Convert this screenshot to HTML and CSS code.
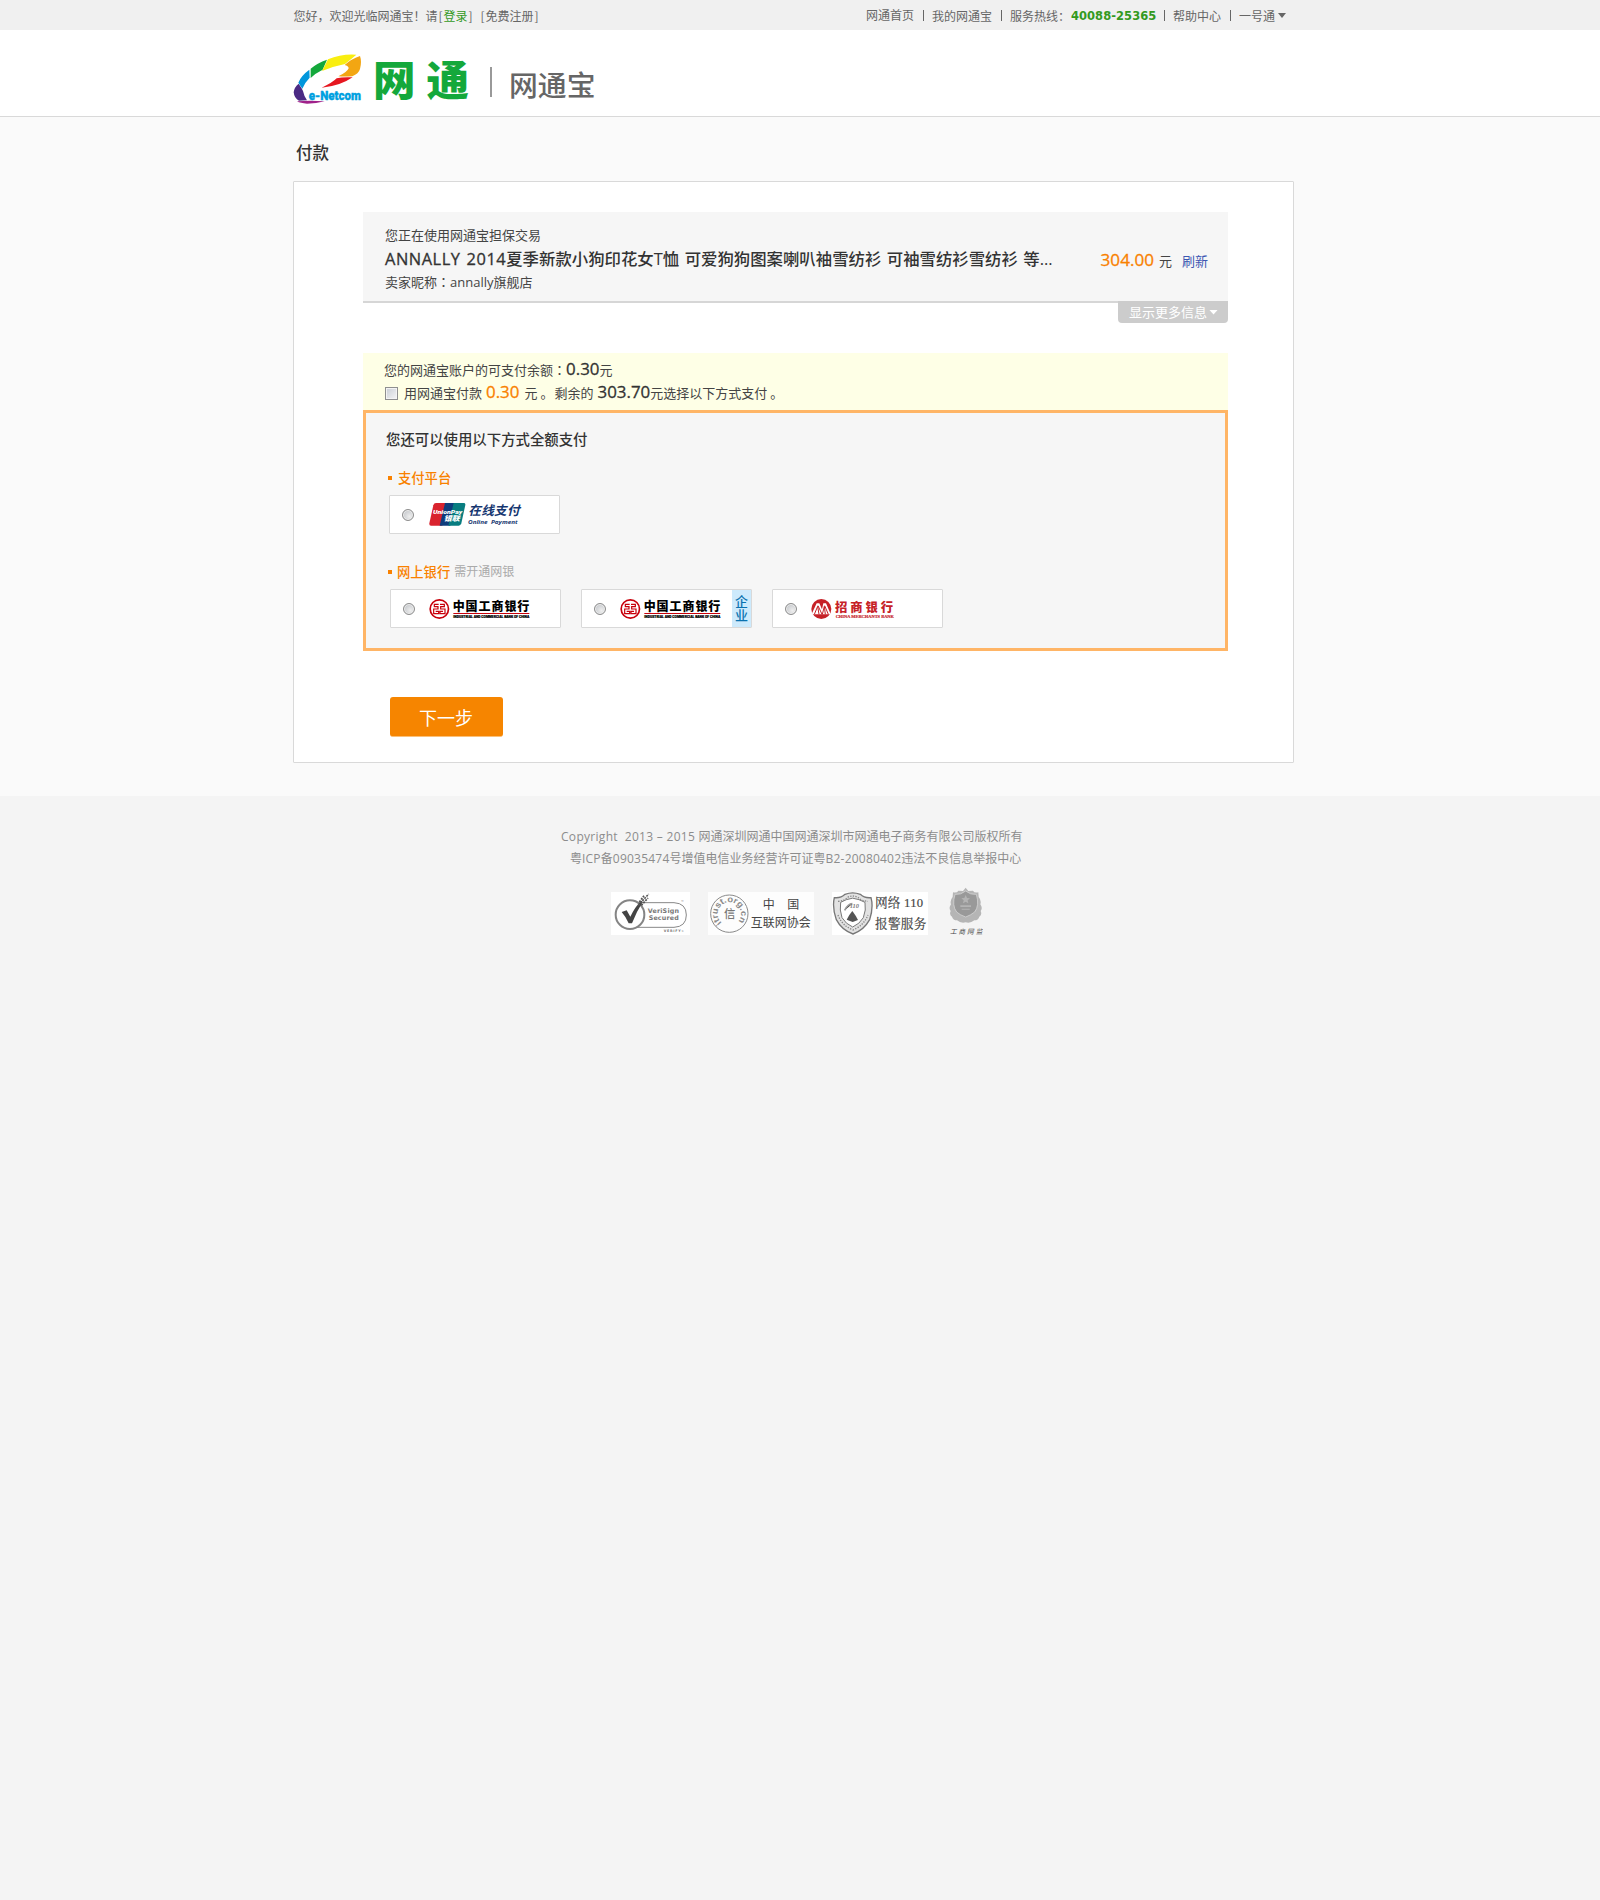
FILE: index.html
```html
<!DOCTYPE html>
<html lang="zh-CN">
<head>
<meta charset="utf-8">
<title>网通宝 - 付款</title>
<link rel="stylesheet" href="styles.css">
</head>
<body>
<div class="topbar">
  <div class="wrap topbar-row">
    <div class="welcome">您好，欢迎光临网通宝！请<i class="half">[</i><a class="green">登录</a><i class="half">]</i><i class="half"></i><i class="half">[</i>免费注册<i class="half">]</i></div>
    <nav class="topnav">
      <a>网通首页</a><a>我的网通宝</a>
      <span class="hotline">服务热线：<b>40088-25365</b></span>
      <a>帮助中心</a><a class="drop">一号通<i class="caret"></i></a>
    </nav>
  </div>
</div>
<header class="header">
  <div class="wrap brand">
    <svg class="logo-mark" viewBox="40 160 210 156">
      <path fill="#4b2a84" d="M57 252Q67 266 70 274Q73 290 82 302L58 303Q44 297 42 278Q44 262 57 252z"/>
      <path fill="#a0218a" d="M52 305Q90 301 135 305Q110 312 82 312Q62 311 52 305z"/>
      <path fill="#0096dc" d="M56 249Q64 228 89 210L90 234Q76 248 68 267z"/>
      <path fill="#14a83b" d="M93 207Q113 190 142 180L129 210Q108 220 93 235z"/>
      <path fill="#f9ee10" d="M145 179Q185 162 230 165L212 180Q202 188 196 193Q160 200 127 214z"/>
      <path fill="#f3a612" d="M241 169Q247 186 241 208Q237 222 218 230Q192 231 176 230Q202 218 207 206Q206 198 195 196Q214 178 241 169z"/>
      <path fill="#e61720" d="M219 233Q180 260 126 264Q160 248 171 236Q190 231 219 233z"/>
      <text x="87" y="300" textLength="157" lengthAdjust="spacingAndGlyphs" class="mark-text">e-Netcom</text>
    </svg>
    <div class="brand-name"><span>网</span><span>通</span></div>
    <div class="product">网通宝</div>
  </div>
</header>
<main class="main">
  <div class="wrap">
    <h1 class="page-title">付款</h1>
    <section class="card">
      <div class="order">
        <div class="order-info">
          <p class="line">您正在使用网通宝担保交易</p>
          <p class="order-title"><span class="latin">ANNALLY 2014</span>夏季新款小狗印花女T恤 可爱狗狗图案喇叭袖雪纺衫 可袖雪纺衫雪纺衫 等...</p>
          <p class="line seller">卖家昵称<i class="colon" lang="zh-TW">：</i>annally旗舰店</p>
        </div>
        <div class="price"><b class="num orange">304.00</b><span>元</span><a>刷新</a></div>
      </div>
      <div class="more">显示更多信息<i class="caret white"></i></div>
      <div class="balance">
        <p>您的网通宝账户的可支付余额<i class="colon" lang="zh-TW">：</i><b class="num">0.30</b>元</p>
        <label><input type="checkbox" class="check"><span class="use">用网通宝付款</span><b class="num orange">0.30</b><span class="yuan">元</span><span class="stop">。</span><span class="rest">剩余的</span><b class="num">303.70</b>元选择以下方式支付<span class="stop">。</span></label>
      </div>
      <div class="methods">
        <h2>您还可以使用以下方式全额支付</h2>
        <h3>支付平台</h3>
        <div class="options platform">
          <label class="option"><input type="radio" name="pay" class="radio">
            <svg class="pay-logo" width="100" height="29" viewBox="170 120 300 87">
              <path fill="#d9232e" d="M197 129H232L216 197H182Q176 197 177 190L189 136Q191 129 197 129z"/>
              <path fill="#0f3d7c" d="M224 129H256L240 197H208z"/>
              <path fill="#087d80" d="M250 129H280Q286 129 285 135L273 190Q271 197 265 197H234z"/>
              <text x="188" y="162" textLength="88" lengthAdjust="spacingAndGlyphs" class="up-en">UnionPay</text>
              <text x="220" y="184" textLength="48" lengthAdjust="spacingAndGlyphs" class="up-cn">银联</text>
              <text x="294" y="166" textLength="154" class="online-cn">在线支付</text>
              <text x="293" y="192" textLength="149" lengthAdjust="spacingAndGlyphs" class="online-en">Online&#160; Payment</text>
            </svg>
          </label>
        </div>
        <h3 class="banks">网上银行<small>需开通网银</small></h3>
        <div class="options">
          <label class="option"><input type="radio" name="pay" class="radio">
            <svg class="bank-logo" width="105" height="26" viewBox="170 405 315 78">
              <circle cx="207" cy="444" r="27.5" fill="#fff" stroke="#c8000b" stroke-width="5"/>
              <path class="icbc-mark" d="M205 430H192V437H203V444H190V458H205V451H196M209 430H222V437H211V444H224V458H209V451H218"/>
              <text x="247" y="450" textLength="230" class="icbc-cn">中国工商银行</text>
              <path fill="#c8000b" d="M249 456H477V459H249z"/>
              <text x="249" y="471" textLength="228" lengthAdjust="spacingAndGlyphs" class="icbc-en">INDUSTRIAL AND COMMERCIAL BANK OF CHINA</text>
            </svg>
          </label>
          <label class="option"><input type="radio" name="pay" class="radio">
            <svg class="bank-logo" width="105" height="26" viewBox="170 405 315 78">
              <circle cx="207" cy="444" r="27.5" fill="#fff" stroke="#c8000b" stroke-width="5"/>
              <path class="icbc-mark" d="M205 430H192V437H203V444H190V458H205V451H196M209 430H222V437H211V444H224V458H209V451H218"/>
              <text x="247" y="450" textLength="230" class="icbc-cn">中国工商银行</text>
              <path fill="#c8000b" d="M249 456H477V459H249z"/>
              <text x="249" y="471" textLength="228" lengthAdjust="spacingAndGlyphs" class="icbc-en">INDUSTRIAL AND COMMERCIAL BANK OF CHINA</text>
            </svg>
            <span class="corp">企业</span>
          </label>
          <label class="option"><input type="radio" name="pay" class="radio">
            <svg class="bank-logo" width="105" height="26" viewBox="206 105 315 78">
              <circle cx="243" cy="144" r="30" fill="#c62127"/>
              <path fill="#fff" d="M215 157L229 127H237L245 145L249 127H257L270 157V160H216z"/>
              <path fill="none" stroke="#c62127" stroke-width="3" d="M222 160L232 136L236 160M233 134L245 160M246 160L252 136L255 160M253 134L264 160"/>
              <text x="284" y="154" textLength="174" class="cmb-cn">招商银行</text>
              <text x="286" y="172" textLength="175" lengthAdjust="spacingAndGlyphs" class="cmb-en">CHINA MERCHANTS BANK</text>
            </svg>
          </label>
        </div>
      </div>
      <button class="next">下一步</button>
    </section>
  </div>
</main>
<footer class="footer">
  <p class="copy"><span>Copyright&nbsp; 2013 – 2015 </span>网通深圳网通中国网通深圳市网通电子商务有限公司版权所有</p>
  <p class="icp">粤<span>ICP</span>备<span>09035474</span>号增值电信业务经营许可证粤<span>B2-20080402</span>违法不良信息举报中心</p>
  <div class="badges">
    <svg class="verisign" width="79" height="43" viewBox="33 36 237 129">
      <rect x="33" y="36" width="237" height="129" fill="#fff"/>
      <path fill="none" stroke="#888" stroke-width="3" d="M110 68H222Q259 70 259 105T222 142H110"/>
      <circle cx="90" cy="104" r="43" fill="#fff" stroke="#858585" stroke-width="6"/>
      <path fill="#444" d="M65 96L80 91L91 110Q105 80 124 62L128 66Q110 94 96 130H86Q76 108 65 96z"/>
      <path fill="none" stroke="#555" stroke-width="5" stroke-dasharray="6 3" d="M115 76L146 42M118 66L132 47M124 76L144 54"/>
      <text x="143" y="98" textLength="94" class="vs-text">VeriSign</text>
      <text x="146" y="121" textLength="90" class="vs-text">Secured</text>
      <text x="242" y="70" class="vs-tiny">™</text>
      <text x="191" y="157" textLength="60" class="vs-tiny">VERIFY»</text>
    </svg>
    <svg class="itrust" width="106" height="43" viewBox="324 36 318 129">
      <rect x="324" y="36" width="318" height="129" fill="#fdfdfd"/>
      <circle cx="388" cy="101" r="56" fill="none" stroke="#8a8a8a" stroke-width="3"/>
      <path id="ring" fill="none" d="M365 128A35 35 0 1 1 411 128"/>
      <text class="ring-text" textLength="164" lengthAdjust="spacingAndGlyphs"><textPath href="#ring">itrust.org.cn</textPath></text>
      <text x="372" y="114" class="xin">信</text>
      <text x="488" y="87" textLength="110" class="it-cn">中 国</text>
      <text x="452" y="142" textLength="180" class="it-cn">互联网协会</text>
    </svg>
    <svg class="police" width="96" height="43" viewBox="36 36 288 129">
      <rect x="36" y="36" width="288" height="129" fill="#fff"/>
      <path fill="#e2e2e2" stroke="#777" stroke-width="4" d="M75 43Q98 34 121 43Q133 55 153 53Q161 82 149 119Q132 150 99 162Q65 150 49 119Q36 82 43 53Q63 55 75 43z"/>
      <path fill="#fff" stroke="#777" stroke-width="3" d="M79 59Q98 50 117 59L135 67Q139 90 130 113Q119 132 98 141Q77 132 66 113Q58 90 62 67z"/>
      <path fill="none" stroke="#888" stroke-width="4" stroke-dasharray="4 4" d="M54 64Q74 63 81 53Q98 43 115 53Q124 63 144 64M54 105Q65 136 99 150Q132 136 144 105"/>
      <path fill="#555" d="M97 93L107 107L114 120L98 126L80 119L88 105z"/>
      <path stroke="#999" stroke-width="5" d="M74 91Q84 72 97 71"/>
      <text x="89" y="84" class="p-num">110</text>
      <text x="165" y="81" textLength="144" class="p-cn">网络 110</text>
      <text x="165" y="143" textLength="154" class="p-cn">报警服务</text>
    </svg>
    <svg class="emblem" width="34" height="50" viewBox="388 22 102 150">
      <path fill="#b5b5b5" d="M438 24L446 34L460 33Q464 41 476 38L477 52Q486 62 482 74Q490 85 483 94Q488 105 479 111Q476 122 464 122Q452 132 438 128Q424 132 412 122Q400 122 397 111Q388 105 393 94Q386 85 394 74Q390 62 399 52L400 38Q412 41 416 33L430 34z"/>
      <path fill="#999" stroke="#ddd" stroke-width="2" d="M438 34Q452 46 470 44Q480 78 465 97Q454 106 438 112Q421 106 411 97Q396 78 406 44Q424 46 438 34z"/>
      <path fill="#b4b4b4" d="M438 46L442 55L451 56L444 62L446 71L438 66L430 71L432 62L425 56L434 55zM422 77H454V82H422zM426 87H450V90H426z"/>
      <text x="391" y="162" textLength="97" class="em-cn">工商网监</text>
    </svg>
  </div>
</footer>
</body>
</html>
```

FILE: styles.css
```css
* { box-sizing: border-box; }
body {
  margin: 0;
  min-height: 1900px;
  background: #f4f4f4;
  color: #444;
  font: 13px/24px "Open Sans", "Noto Sans CJK SC", sans-serif;
}
p, h1, h2, h3 { margin: 0; font-weight: 400; }
i { font-style: normal; }
.wrap { width: 1001px; margin-left: 293px; }
.green { color: #339a1e; }
.orange { color: #f98100 !important; }

.topbar { height: 30px; background: #f0f0f0; color: #666; font: 12px/30px "Noto Sans CJK SC", sans-serif; }
.topbar-row { display: flex; justify-content: space-between; white-space: nowrap; }
.welcome { padding: 1px 0 0 .5px; }
.half { display: inline-block; width: 6px; text-align: center; }
.topnav { display: flex; padding-right: 8px; }
.topnav > * + * { display: flex; align-items: center; margin-left: 9px; }
.topnav > * + *::before { content: ""; width: 1px; height: 11px; margin-right: 8px; background: #666; }
.hotline b { width: 84px; margin-left: 1px; color: #339a1e; font: bold 11.5px "DejaVu Sans", sans-serif; letter-spacing: .05px; }
.caret { width: 8px; height: 5px; margin-left: 3px; background: #666; clip-path: polygon(0 0, 100% 0, 50% 100%); }

.header { height: 87px; background: #fff; border-bottom: 1px solid #d9d9d9; }
.brand { display: flex; }
.logo-mark { width: 70px; height: 52px; margin-top: 23px; overflow: visible; }
.mark-text { font: 900 36px Roboto, sans-serif; fill: #00a0e0; stroke: #00a0e0; stroke-width: 1px; }
.brand-name { display: flex; gap: 11px; margin: 27px 0 0 10px; color: #14a83b; font: 900 42.5px/42px "Noto Sans CJK SC", sans-serif; }
.product { height: 30px; margin: 37px 0 0 21px; padding-left: 17px; border-left: 2px solid #999; color: #666; font: 500 28.8px/34px "Noto Sans CJK SC", sans-serif; }

.main { height: 679px; background: #fafafa; }
.page-title { height: 64px; padding: 24px 0 0 3px; color: #333; font-size: 16.5px; font-weight: 500; }
.card { height: 582px; padding: 30px 65px 0 69px; background: #fff; border: 1px solid #d9d9d9; border-radius: 1px; }
.order { display: flex; justify-content: space-between; height: 91px; padding: 11px 20px 0 22px; background: #f6f6f6; border-bottom: 2px solid #d6d6d6; white-space: nowrap; }
.order-title { color: #333; font-size: 16.4px; font-weight: 500; word-spacing: 1.2px; }
.latin { letter-spacing: .55px; -webkit-text-stroke: .3px #333; }
.seller { margin-top: -1px; }
.price { display: flex; margin-top: 26px; }
.price .num { margin-top: -1px; font-size: 17.1px; }
.price span { margin-left: 5px; }
.price a { margin-left: 10px; color: #3c57b2; }
.num { color: #333; font-size: 16.9px; font-weight: 400; -webkit-text-stroke: .3px; }
.colon { font-family: "Noto Sans CJK TC", sans-serif; font-weight: 400; }
.more { display: flex; align-items: center; width: 110px; height: 22px; margin: -2px 0 0 auto; padding-left: 11px; position: relative; background: #ccc; border-radius: 0 0 4px 4px; color: #fff; line-height: 22px; }
.caret.white { width: 9px; margin-left: 2px; background: #fff; }
.balance { height: 57px; margin-top: 30px; padding: 5px 0 0 21px; background: #feffe6; white-space: nowrap; }
.balance p, .balance label { display: flex; height: 23px; }
.balance .num { margin-top: -1px; }
.check { appearance: none; width: 13px; height: 13px; margin: 6px 6px 0 1px; border: 1px solid #8e8f8f; background: linear-gradient(135deg, #c9ced6, #f5f5f5); box-shadow: inset 0 0 0 1px #f4f4f4; }
.use { margin-right: 4px; }
.yuan { margin-left: 5px; }
.stop { margin-left: 3px; }
.rest { margin: 0 4px 0 1px; }
.methods { height: 241px; padding: 15px 20px 0 20px; background: #f6f6f6; border: 3px solid #ffb566; }
.methods h2 { color: #333; font-size: 14.4px; font-weight: 500; }
.methods h3 { display: flex; align-items: center; margin: 14px 0 0 2px; color: #f98100; font-size: 13.3px; font-weight: 500; }
.methods h3::before { content: ""; width: 4px; height: 4px; margin-right: 6px; background: #f98100; }
.methods h3.banks::before { margin-right: 5px; }
.methods small { margin-left: 4px; color: #aaa; font-size: 12px; font-weight: 400; }
.options { display: flex; gap: 20px; margin: 5px 0 0 4px; }
.options.platform { margin: 5px 0 26px 3px; }
.option { display: flex; align-items: center; width: 171px; height: 39px; padding-left: 12px; background: #fff; border: 1px solid #d9d9d9; border-radius: 1px; }
.radio { appearance: none; width: 12px; height: 12px; margin: 0; border: 1px solid #8c8c8c; border-radius: 50%; background: radial-gradient(circle at 65% 65%, #eee, #b9bdc2); box-shadow: inset 0 0 0 1px #eee; }
.pay-logo, .bank-logo { flex: none; margin-left: 12px; }
.pay-logo { margin-left: 13px; }
.corp { width: 19px; height: 37px; margin-left: auto; padding: 4px 3px 0; background: #cdeafc; color: #0a72b0; font-size: 13px; font-weight: 500; line-height: 14px; }
.up-en { font: italic 900 18px Roboto, sans-serif; fill: #fff; }
.up-cn { font: italic 900 21px "Noto Sans CJK SC", sans-serif; fill: #fff; }
.online-cn { font: italic 700 38px "Noto Sans CJK SC", sans-serif; fill: #15366f; }
.online-en { font: italic bold 17px "Open Sans", sans-serif; fill: #15366f; }
.icbc-mark { fill: none; stroke: #c8000b; stroke-width: 3.6; }
.icbc-cn { font: 900 36px "Noto Sans CJK SC", sans-serif; fill: #000; }
.icbc-en { font: 900 10px Roboto, sans-serif; fill: #000; stroke: #000; stroke-width: .6px; }
.cmb-cn { font: 900 37px "Noto Sans CJK SC", sans-serif; fill: #c62127; }
.cmb-en { font: bold 13px "Liberation Serif", serif; fill: #c62127; stroke: #c62127; stroke-width: .5px; }
.next { display: block; width: 113px; height: 40px; margin: 46px 0 0 27px; padding: 0 1px 0 0; border: 0; border-bottom: 1px solid #fbc078; border-radius: 3px; background: #f68500; color: #fff; font: 18px/40px "Noto Sans CJK SC", sans-serif; }

.footer { color: #8c8c8c; font-size: 12px; line-height: 22px; padding-top: 30px; white-space: nowrap; }
.copy { padding-left: 561px; }
.copy span { letter-spacing: .3px; }
.icp { padding-left: 570px; }
.icp span { letter-spacing: .22px; }
.badges { display: flex; align-items: flex-start; margin: 18px 0 0 611px; }
.badges svg { margin-top: 4px; }
.badges .itrust { margin-left: 18px; }
.badges .police { margin-left: 18px; }
.badges .emblem { margin: -1px 0 0 21px; }
.vs-text { font: bold 19px "DejaVu Sans", sans-serif; fill: #777; }
.vs-tiny { font: bold 10px "DejaVu Sans", sans-serif; fill: #777; }
.ring-text { font: bold 26px "Liberation Sans", sans-serif; fill: #8a8a8a; }
.xin { font: 500 34px "Noto Sans CJK SC", sans-serif; fill: #777; }
.it-cn { font: 36px "Noto Sans CJK SC", sans-serif; fill: #444; }
.p-num { font: italic bold 19px "Liberation Serif", serif; fill: #777; }
.p-cn { font: 400 38px "Liberation Serif", "Noto Serif CJK SC", "Noto Sans CJK SC", serif; fill: #444; stroke: #444; stroke-width: .5px; }
.em-cn { font: italic 20px "Noto Sans CJK SC", sans-serif; fill: #444; }
```
